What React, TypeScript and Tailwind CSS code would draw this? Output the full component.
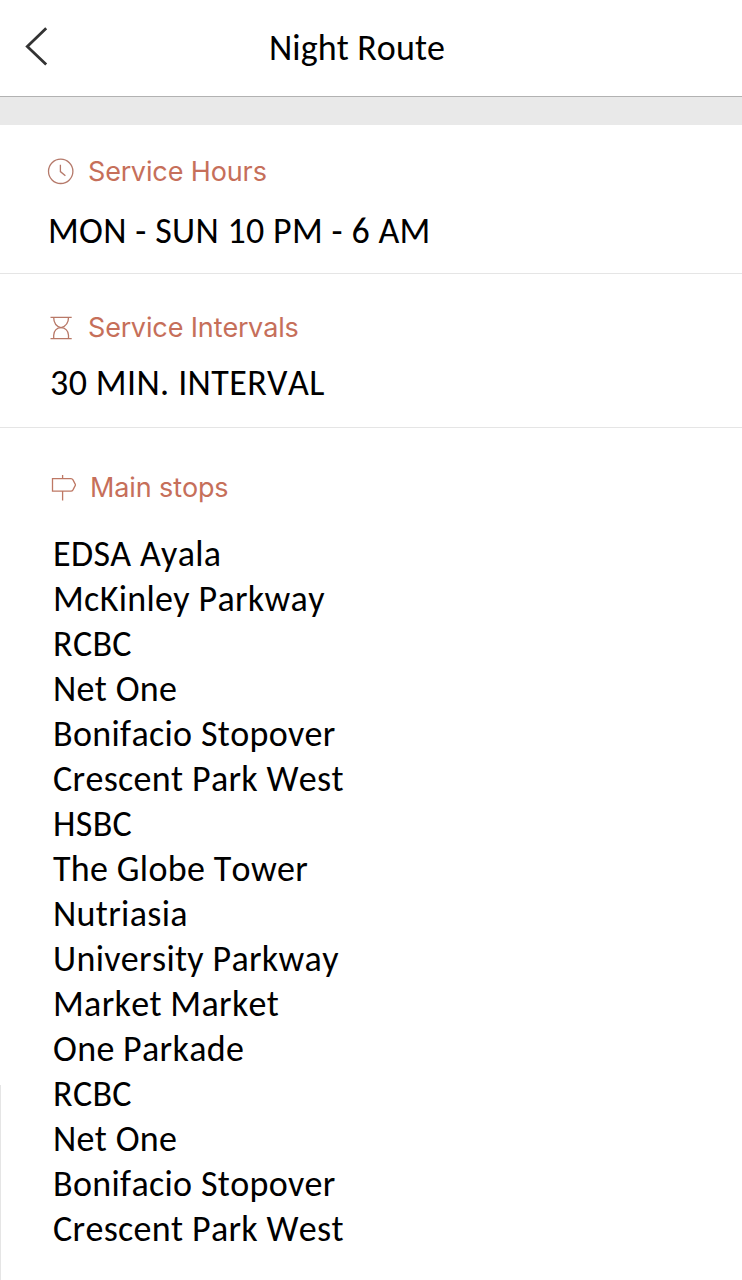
import type { ReactNode } from 'react';

const stops = [
  'EDSA Ayala',
  'McKinley Parkway',
  'RCBC',
  'Net One',
  'Bonifacio Stopover',
  'Crescent Park West',
  'HSBC',
  'The Globe Tower',
  'Nutriasia',
  'University Parkway',
  'Market Market',
  'One Parkade',
  'RCBC',
  'Net One',
  'Bonifacio Stopover',
  'Crescent Park West',
];

function ClockIcon() {
  return (
    <svg width="28" height="28" viewBox="0 0 28 28" fill="none" stroke="#b5796a" strokeWidth="1.3">
      <circle cx="13.700" cy="13.300" r="12.200" />
      <path d="M13.400 6.800v6.800l5 4.200" />
    </svg>
  );
}

function HourglassIcon() {
  return (
    <svg width="28" height="28" viewBox="0 0 28 28" fill="none" stroke="#b87867" strokeWidth="1.3">
      <path d="M3.500 3.400h21.200M3.500 24.700h21.200" />
      <path d="M6.700 3.400c0 5.800 2.300 8.800 7.300 10.300 5-1.500 7.500-4.500 7.500-10.300" />
      <path d="M6.700 24.700v-3.500c0-4.300 3-7.500 7.300-7.500s7.500 3.200 7.500 7.500v3.500" />
    </svg>
  );
}

function SignpostIcon() {
  return (
    <svg width="28" height="28" viewBox="0 0 28 28" fill="none" stroke="#be7864" strokeWidth="1.3">
      <path d="M4.500 4.700h18.500q1.300 0 2 1.200l2.600 5-2.600 5q-.7 1.200-2 1.200H4.500zM14.600 1v3.700M14.600 17.100v9.400" />
    </svg>
  );
}

function SectionTitle({ icon, children }: { icon: ReactNode; children: ReactNode }) {
  return (
    <h2 className="flex h-8 items-center font-['Inter',sans-serif] text-[27px] leading-8 tracking-[-0.12px] text-[#c66f5a]">
      <span className="mr-[13px] shrink-0">{icon}</span>
      {children}
    </h2>
  );
}

export default function App() {
  return (
    <div className="flex h-[1280px] w-[742px] flex-col bg-white font-['Carlito','Calibri','Lato',sans-serif] text-[36px] leading-[45px] tracking-[0.33px] text-black [font-kerning:none]">
      <header className="grid h-[97px] grid-cols-[240px_1fr_268px] border-b border-[#b2b2b2]">
        <button aria-label="Back" className="flex items-start pt-[26px] pl-6">
          <svg width="26" height="42" viewBox="0 0 26 42" fill="none" stroke="#333" strokeWidth="2.800">
            <path d="M22.200 2.200 3.300 20.500 22.200 38.500" />
          </svg>
        </button>
        <h1 className="pt-[26px] pl-[29px] tracking-[0.1px] whitespace-nowrap">Night Route</h1>
      </header>
      <div className="h-7 bg-[#e9e9e9]" />
      <section className="h-[149px] border-b border-[#e5e5e5] pt-[31px] pl-[47px]">
        <SectionTitle icon={<ClockIcon />}>Service Hours</SectionTitle>
        <p className="mt-[21px] pl-px">MON - SUN 10 PM - 6 AM</p>
      </section>
      <section className="h-[154px] border-b border-[#e5e5e5] pt-[38px] pl-[47px]">
        <SectionTitle icon={<HourglassIcon />}>Service Intervals</SectionTitle>
        <p className="mt-[17px] pl-[3px] tracking-[0.4px]">30 MIN. INTERVAL</p>
      </section>
      <section className="flex flex-1">
        <div className="mt-[657px] w-px bg-[#e5e5e5]" />
        <div className="pt-[44px] pl-[47px]">
          <SectionTitle icon={<SignpostIcon />}>
            <span className="pl-px">Main stops</span>
          </SectionTitle>
          <ul className="mt-[28px] pl-[5px]">
            {stops.map((stop, i) => (
              <li key={i}>{stop}</li>
            ))}
          </ul>
        </div>
      </section>
    </div>
  );
}
